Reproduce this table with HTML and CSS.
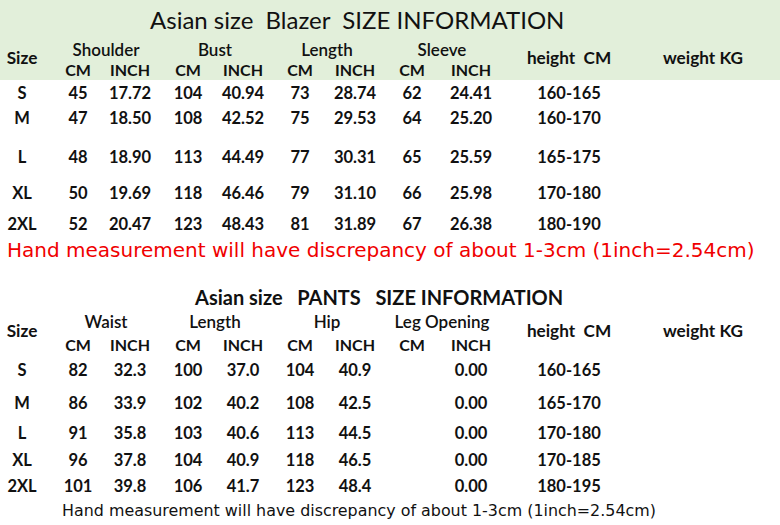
FILE: index.html
```html
<!DOCTYPE html>
<html>
<head>
<meta charset="utf-8">
<link rel="stylesheet" href="styles.css">
</head>
<body>
<div class="sheet">
  <section class="blazer">
    <div class="head">
      <h1 class="title title-blazer">Asian size&nbsp; Blazer&nbsp; SIZE INFORMATION</h1>
      <div class="grid hdr hdr-blazer">
        <div class="c-size span2 side">Size</div>
        <div class="g1 grp">Shoulder</div>
        <div class="g2 grp">Bust</div>
        <div class="g3 grp">Length</div>
        <div class="g4 grp">Sleeve</div>
        <div class="c-h span2 side">height&nbsp; CM</div>
        <div class="c-w span2 side">weight KG</div>
        <div class="c-cm1 sub">CM</div>
        <div class="c-in1 sub">INCH</div>
        <div class="c-cm2 sub">CM</div>
        <div class="c-in2 sub">INCH</div>
        <div class="c-cm3 sub">CM</div>
        <div class="c-in3 sub">INCH</div>
        <div class="c-cm4 sub">CM</div>
        <div class="c-in4 sub">INCH</div>
      </div>
    </div>
    <div class="rows rows-blazer">
      <div class="grid row b1"><div class="c-size">S</div><div class="c-cm1">45</div><div class="c-in1">17.72</div><div class="c-cm2">104</div><div class="c-in2">40.94</div><div class="c-cm3">73</div><div class="c-in3">28.74</div><div class="c-cm4">62</div><div class="c-in4">24.41</div><div class="c-h">160-165</div></div>
      <div class="grid row b2"><div class="c-size">M</div><div class="c-cm1">47</div><div class="c-in1">18.50</div><div class="c-cm2">108</div><div class="c-in2">42.52</div><div class="c-cm3">75</div><div class="c-in3">29.53</div><div class="c-cm4">64</div><div class="c-in4">25.20</div><div class="c-h">160-170</div></div>
      <div class="grid row b3"><div class="c-size">L</div><div class="c-cm1">48</div><div class="c-in1">18.90</div><div class="c-cm2">113</div><div class="c-in2">44.49</div><div class="c-cm3">77</div><div class="c-in3">30.31</div><div class="c-cm4">65</div><div class="c-in4">25.59</div><div class="c-h">165-175</div></div>
      <div class="grid row b4"><div class="c-size">XL</div><div class="c-cm1">50</div><div class="c-in1">19.69</div><div class="c-cm2">118</div><div class="c-in2">46.46</div><div class="c-cm3">79</div><div class="c-in3">31.10</div><div class="c-cm4">66</div><div class="c-in4">25.98</div><div class="c-h">170-180</div></div>
      <div class="grid row b5"><div class="c-size">2XL</div><div class="c-cm1">52</div><div class="c-in1">20.47</div><div class="c-cm2">123</div><div class="c-in2">48.43</div><div class="c-cm3">81</div><div class="c-in3">31.89</div><div class="c-cm4">67</div><div class="c-in4">26.38</div><div class="c-h">180-190</div></div>
    </div>
    <p class="note note-red">Hand measurement will have discrepancy of about 1-3cm (1inch=2.54cm)</p>
  </section>

  <section class="pants">
    <h2 class="title title-pants">Asian size&nbsp;&nbsp; PANTS&nbsp;&nbsp; SIZE INFORMATION</h2>
    <div class="grid hdr hdr-pants">
      <div class="c-size span2 side">Size</div>
      <div class="g1 grp">Waist</div>
      <div class="g2 grp">Length</div>
      <div class="g3 grp">Hip</div>
      <div class="g4 grp">Leg Opening</div>
      <div class="c-h span2 side">height&nbsp; CM</div>
      <div class="c-w span2 side">weight KG</div>
      <div class="c-cm1 sub">CM</div>
      <div class="c-in1 sub">INCH</div>
      <div class="c-cm2 sub">CM</div>
      <div class="c-in2 sub">INCH</div>
      <div class="c-cm3 sub">CM</div>
      <div class="c-in3 sub">INCH</div>
      <div class="c-cm4 sub">CM</div>
      <div class="c-in4 sub">INCH</div>
    </div>
    <div class="rows">
      <div class="grid row p1"><div class="c-size">S</div><div class="c-cm1">82</div><div class="c-in1">32.3</div><div class="c-cm2">100</div><div class="c-in2">37.0</div><div class="c-cm3">104</div><div class="c-in3">40.9</div><div class="c-in4">0.00</div><div class="c-h">160-165</div></div>
      <div class="grid row p2"><div class="c-size">M</div><div class="c-cm1">86</div><div class="c-in1">33.9</div><div class="c-cm2">102</div><div class="c-in2">40.2</div><div class="c-cm3">108</div><div class="c-in3">42.5</div><div class="c-in4">0.00</div><div class="c-h">165-170</div></div>
      <div class="grid row p3"><div class="c-size">L</div><div class="c-cm1">91</div><div class="c-in1">35.8</div><div class="c-cm2">103</div><div class="c-in2">40.6</div><div class="c-cm3">113</div><div class="c-in3">44.5</div><div class="c-in4">0.00</div><div class="c-h">170-180</div></div>
      <div class="grid row p4"><div class="c-size">XL</div><div class="c-cm1">96</div><div class="c-in1">37.8</div><div class="c-cm2">104</div><div class="c-in2">40.9</div><div class="c-cm3">118</div><div class="c-in3">46.5</div><div class="c-in4">0.00</div><div class="c-h">170-185</div></div>
      <div class="grid row p5"><div class="c-size">2XL</div><div class="c-cm1">101</div><div class="c-in1">39.8</div><div class="c-cm2">106</div><div class="c-in2">41.7</div><div class="c-cm3">123</div><div class="c-in3">48.4</div><div class="c-in4">0.00</div><div class="c-h">180-195</div></div>
    </div>
    <p class="note note-black">Hand measurement will have discrepancy of about 1-3cm (1inch=2.54cm)</p>
  </section>
</div>
</body>
</html>
```

FILE: styles.css
```css
* { box-sizing: border-box; }
html, body { margin: 0; padding: 0; background: #ffffff; }
body {
  font-family: Lato, "Liberation Sans", sans-serif;
  color: #111111;
  width: 780px;
  height: 525px;
  overflow: hidden;
}
.sheet { width: 780px; }

.head { background: #e2efda; height: 80px; }

.title {
  margin: 0;
  font-weight: 400;
  white-space: nowrap;
  color: #111111;
}
.title-blazer {
  font-size: 24px;
  line-height: 40px;
  height: 40px;
  padding-left: 150px;
}
.title-pants {
  font-size: 20px;
  font-weight: 700;
  line-height: 30px;
  height: 30px;
  margin-top: 18px;
  padding-left: 195px;
}

.grid {
  display: grid;
  grid-template-columns: 44px 10px 48px 56px 2px 56px 54px 2px 56px 54px 4px 52px 6px 54px 21px 100px 34px 100px;
  font-weight: 700;
  font-size: 16.5px;
  white-space: nowrap;
  text-align: center;
}
.hdr-blazer { grid-template-rows: 20px 20px; }
.hdr-pants { grid-template-rows: 20px 26px; }

.hdr > div { align-self: center; line-height: 20px; }
.grp { grid-row: 1; font-weight: 600; font-size: 17px; }
.sub { grid-row: 2; font-size: 16px; }
.span2 { grid-row: 1 / span 2; font-size: 17.2px; }
.hdr-blazer .side { padding-bottom: 4px; }
.hdr-pants .side { padding-bottom: 8px; }

.g1 { grid-column: 3 / 5; }
.g2 { grid-column: 6 / 8; }
.g3 { grid-column: 9 / 11; }
.g4 { grid-column: 12 / 15; }

.c-size { grid-column: 1; }
.c-cm1 { grid-column: 3; }
.c-in1 { grid-column: 4; }
.c-cm2 { grid-column: 6; }
.c-in2 { grid-column: 7; }
.c-cm3 { grid-column: 9; }
.c-in3 { grid-column: 10; }
.c-cm4 { grid-column: 12; }
.c-in4 { grid-column: 14; }
.c-h { grid-column: 16; }
.c-w { grid-column: 18; }

.row { line-height: 24px; align-items: start; }
.rows-blazer { padding-top: 1px; }
.b1 { height: 25px; }
.b2 { height: 39px; }
.b3 { height: 36px; }
.b4 { height: 31px; }
.b5 { height: 24px; }
.p1 { height: 33px; }
.p2 { height: 30px; }
.p3 { height: 27px; }
.p4 { height: 26px; }
.p5 { height: 24px; }

.note {
  margin: 0;
  font-family: "DejaVu Sans", Verdana, sans-serif;
  white-space: nowrap;
}
.note-red {
  color: #f00000;
  font-size: 20px;
  line-height: 28px;
  padding-left: 7px;
}
.note-black {
  color: #111111;
  font-size: 15.9px;
  line-height: 26px;
  padding-left: 62px;
}
```
